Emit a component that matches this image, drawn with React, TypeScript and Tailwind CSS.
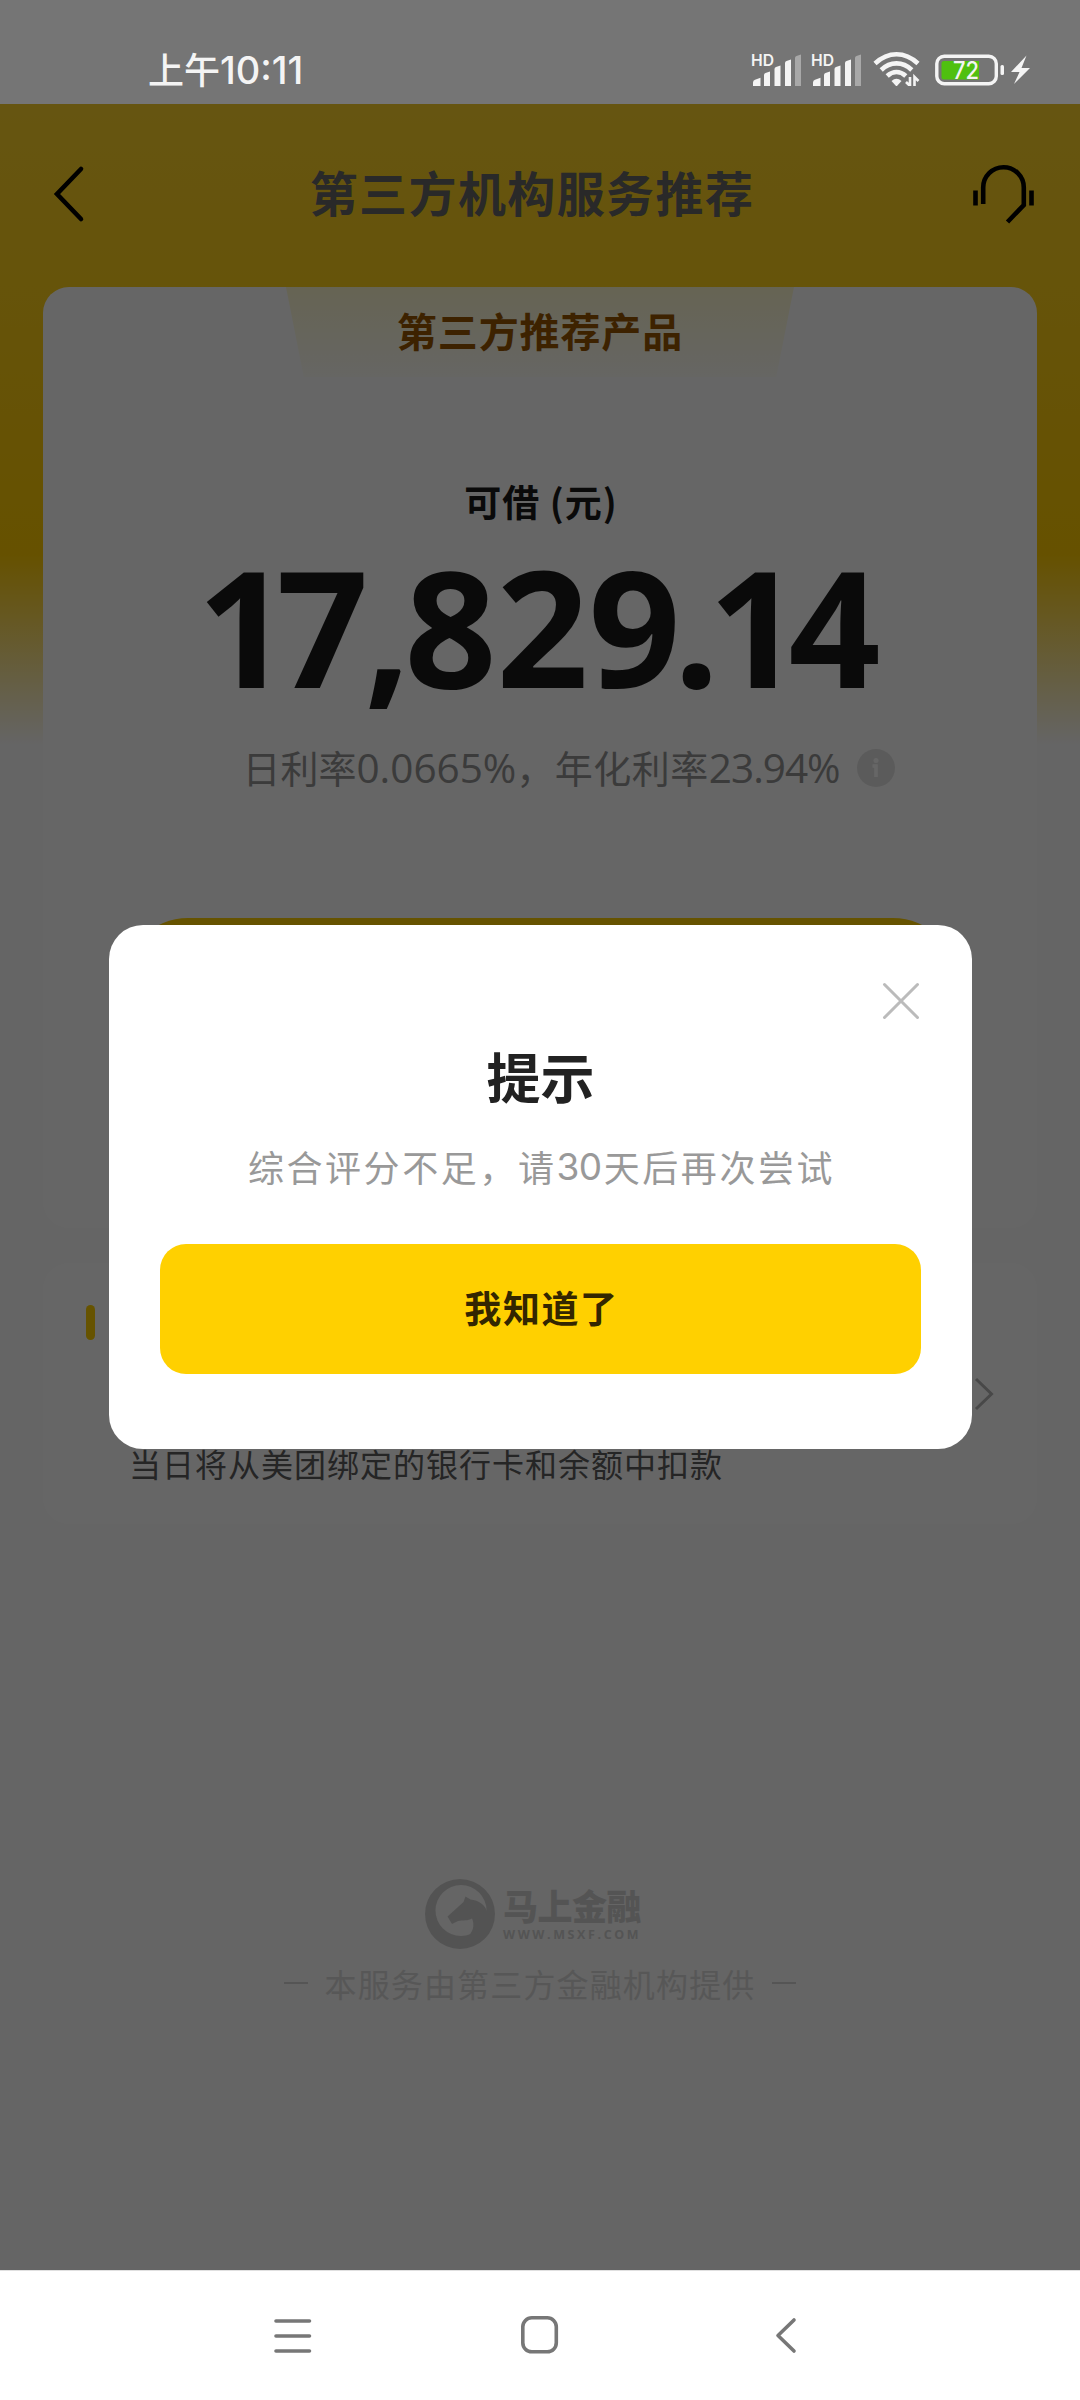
import { useState } from "react";

const CJK = "font-['Noto_Sans_CJK_SC',sans-serif]";
const NUM = "font-['Open_Sans','Noto_Sans_CJK_SC',sans-serif]";

function Signal() {
  return (
    <svg width="60" height="36" viewBox="0 0 60 36" className="shrink-0">
      <text
        x="0"
        y="15.500"
        fontFamily="Inter, sans-serif"
        fontSize="16"
        fontWeight="600"
        textLength="23"
        lengthAdjust="spacingAndGlyphs"
        fill="#f4f4f4"
      >
        HD
      </text>
      <g fill="#f4f4f4">
        <path d="M2 36v-3.500q0-2 2-2.700l5.500-2V36z" />
        <path d="M13 36V25q0-1.500 1.500-2l4.500-1.500V36z" />
        <path d="M23.500 36V19q0-1.500 1.500-2l4.500-1.500V36z" />
        <path d="M34 36V13q0-1.500 1.500-2l4.500-1.500V36z" />
      </g>
      <path d="M44 36V8q0-1.500 1.500-2L50 4.500V36z" fill="#a8a8a8" />
    </svg>
  );
}

function Wifi() {
  return (
    <svg width="48" height="36" viewBox="0 0 48 36" className="shrink-0" fill="none">
      <g stroke="#f4f4f4" strokeWidth="4.600">
        <path d="M2 13.500Q12 4.300 23.500 4.300T45 13.500" />
        <path d="M8.200 20Q15 13.400 23.500 13.400T38.800 20" />
        <path d="M14.200 26Q18.500 22 23.500 22T32.800 26" />
      </g>
      <path d="M18.500 31q5-4.500 10 0l-5 5.500z" fill="#f4f4f4" />
      <g stroke="#f4f4f4" strokeWidth="2.600">
        <path d="M37 27v9l-4-4" />
        <path d="M41.500 36v-9l4 4" />
      </g>
    </svg>
  );
}

function Battery() {
  return (
    <svg width="98" height="36" viewBox="0 0 98 36" className="shrink-0">
      <rect x="1.800" y="6.200" width="59.500" height="27.500" rx="7.500" fill="none" stroke="#f4f4f4" strokeWidth="3.400" />
      <path d="M9 10.900h35v18.500H9q-2.500 0-2.500-2.500V13.400q0-2.500 2.500-2.500z" fill="#4fc010" />
      <rect x="65.500" y="15" width="3.500" height="10" rx="1.500" fill="#f4f4f4" />
      <text x="18" y="28.800" fontFamily="Inter, sans-serif" fontSize="24" fontWeight="500" textLength="26" lengthAdjust="spacingAndGlyphs" fill="#f4f4f4">
        72
      </text>
      <path d="M91.500 5.500L76 22h8.500L79 34 95 18h-8.500z" fill="#f4f4f4" />
    </svg>
  );
}

function StatusBar() {
  return (
    <div className="flex h-[104px] items-start bg-[#757575] pl-[148px]">
      <div className="mt-[48px] flex h-10 w-[160px] items-center leading-10 whitespace-nowrap text-[#f4f4f4]">
        <span className={`${CJK} text-4xl leading-10 font-medium`}>上午</span>
        <span className="mt-[3px] font-['Inter',sans-serif] text-[38px] leading-10 font-medium">10:11</span>
      </div>
      <div className="mt-[50px] ml-[443px] flex">
        <Signal />
        <Signal />
        <div className="ml-[2px] flex">
          <Wifi />
        </div>
        <div className="ml-[14px] flex">
          <Battery />
        </div>
      </div>
    </div>
  );
}

function Header() {
  return (
    <div className="flex h-[183px] items-start justify-between pt-[58px] pr-[43px] pl-[52px]">
      <svg width="36" height="64" viewBox="0 0 36 64" fill="none" stroke="#000" strokeWidth="4.600">
        <path d="M29 7L5 32 29 57" strokeLinecap="round" />
      </svg>
      <h1 className={`${CJK} -mt-px ml-[3px] text-5xl leading-[60px] font-bold tracking-[1.400px] text-[#666]`}>
        第三方机构服务推荐
      </h1>
      <svg width="64" height="66" viewBox="0 0 64 66" fill="none" stroke="#000" strokeWidth="4.600">
        <path d="M10.200 42V25.500a20.300 20.300 0 0 1 40.600 0V43L34.500 60" />
        <path d="M2.500 28.500v15M58.500 28.500v15" strokeWidth="4.600" />
      </svg>
    </div>
  );
}

function QuotaCard() {
  return (
    <section className="mx-[43px] flex h-[941px] flex-col items-center overflow-hidden rounded-[26px] bg-white">
      <div className="flex h-[90px] w-[508px] justify-center bg-linear-to-b from-[#fffad0] to-[#fffef8] pt-[15px] [clip-path:polygon(0_0,100%_0,96.500%_100%,3.500%_100%)]">
        <span className={`${CJK} text-[40px] leading-[56px] font-bold tracking-[0.900px] text-[#985600]`}>第三方推荐产品</span>
      </div>
      <div className={`${CJK} mt-[96px] ml-[2px] text-[37px] leading-[56px] font-bold tracking-[1px] text-[#1a1a1a]`}>可借 (元)</div>
      <div className={`${NUM} mt-[2px] mr-[2px] flex h-[190px] items-center text-[161px] leading-[190px] font-[680] text-[#1a1a1a]`}>
        <span className="tracking-[-13px]">1</span>
        <span className="tracking-[-4px]">7</span>
        <span className="tracking-[-6px]">,</span>
        <span>82</span>
        <span className="tracking-[-7px]">9</span>
        <span className="tracking-[-11px]">.</span>
        <span className="tracking-[-12px]">1</span>
        <span>4</span>
      </div>
      <div className="mt-[23px] ml-[57px] flex h-[48px] items-center text-[38px] leading-[48px] text-[#949494]">
        <span className={`${CJK} -mt-[2px]`}>日利率</span>
        <span className={`${NUM} text-[40.500px]`}>0.0665%</span>
        <span className={`${CJK} -mt-[2px] tracking-[0.500px]`}>，年化利率</span>
        <span className={`${NUM} text-[40.500px] tracking-[-1px]`}>23.94%</span>
        <svg width="38" height="38" viewBox="0 0 38 38" className="ml-[17px]">
          <circle cx="19" cy="19" r="19" fill="#e4e4e4" />
          <circle cx="19" cy="11.500" r="2.500" fill="#fff" />
          <path d="M15.500 17H19v11" fill="none" stroke="#fff" strokeWidth="3.500" />
        </svg>
      </div>
      <div className="mt-[126px] h-[130px] w-[835px] shrink-0 rounded-full bg-[#ffd000]" />
    </section>
  );
}

function RepayCard() {
  return (
    <section className="mx-[43px] mt-[35px] h-[261px] rounded-[26px] bg-white pt-[42px] pr-[42px] pl-[43px]">
      <div className="h-[35px] w-[9px] rounded-full bg-[#ffd000]" />
      <div className="mt-[36px] flex justify-end">
        <svg width="22" height="36" viewBox="0 0 22 36" fill="none" stroke="#b4b4b4" strokeWidth="3">
          <path d="M3 3l15.500 15L3 33" />
        </svg>
      </div>
      <p className={`${CJK} mt-[28px] ml-[43px] text-[32px] leading-[46px] tracking-[1px] text-[#5c5c5c]`}>
        当日将从美团绑定的银行卡和余额中扣款
      </p>
    </section>
  );
}

function Provider() {
  return (
    <footer className="mt-[355px] flex flex-col items-center text-[#d2d2d2]">
      <div className="flex items-center gap-[8px] pr-[14px]">
        <svg width="70" height="70" viewBox="0 0 70 70" fill="#d0d0d0">
          <path
            fillRule="evenodd"
            d="M35 0a35 35 0 1 0 0 70a35 35 0 1 0 0-70zM36 6a25.500 25.500 0 1 0 0 51a25.500 25.500 0 1 0 0-51z"
          />
          <path d="M22.500 37.500L38.500 23l2-5.500 5 3C54 21 60 26 63 34l3 11-10 15-14-2c6-4 8-12 5-18.500-4 2.500-9 1.500-14 2.500l-6 3z" />
        </svg>
        <div className="flex w-[138px] flex-col">
          <span className={`${CJK} h-[36px] text-[35px] leading-[36px] font-black tracking-[-0.500px] whitespace-nowrap`}>马上金融</span>
          <span className="mt-[5px] font-['Open_Sans',sans-serif] text-[12.500px] leading-[14px] font-bold tracking-[2.600px]">
            WWW.MSXF.COM
          </span>
        </div>
      </div>
      <div className="mt-[11px] flex items-center gap-[17px] text-[#dadada]">
        <span className="h-[2px] w-[24px] bg-[#d4d4d4]" />
        <span className={`${CJK} text-[32px] leading-[46px] tracking-[1.150px]`}>本服务由第三方金融机构提供</span>
        <span className="h-[2px] w-[24px] bg-[#d4d4d4]" />
      </div>
    </footer>
  );
}

function TipModal({ onClose }: { onClose: () => void }) {
  return (
    <div className="absolute inset-0 flex items-start justify-center bg-black/60 pt-[821px]">
      <div className="ml-px flex h-[524px] w-[863px] flex-col items-center rounded-[34px] bg-white px-[51px]">
        <button onClick={onClose} className="mt-[57px] mr-px self-end">
          <svg width="38" height="38" viewBox="0 0 38 38" fill="none" stroke="#bbb" strokeWidth="3" strokeLinecap="round">
            <path d="M2.500 2.500l33 33M35.500 2.500l-33 33" />
          </svg>
        </button>
        <h2 className={`${CJK} mt-[24px] text-[54px] leading-[64px] font-bold text-[#222]`}>提示</h2>
        <p className={`${CJK} mt-[30px] ml-[2px] flex items-center text-[36px] leading-[52px] text-[#999]`}>
          <span className="tracking-[2.570px]">综合评分不足，请</span>
          <span className="mt-[3px] mr-[2px] font-['Inter',sans-serif] text-[37px] tracking-[-0.500px]">30</span>
          <span className="tracking-[2.570px]">天后再次尝试</span>
        </p>
        <button
          onClick={onClose}
          className={`${CJK} mt-[51px] h-[130px] w-[761px] shrink-0 rounded-[26px] bg-[#ffd000] pb-[2px] pl-[2px] text-[37px] font-bold tracking-[1.600px] text-[#332600]`}
        >
          我知道了
        </button>
      </div>
    </div>
  );
}

function NavBar() {
  return (
    <nav className="flex h-[130px] border-t border-[#e0e0e0] bg-white pt-[44px] pl-[272px]">
      <svg width="42" height="42" viewBox="0 0 42 42" fill="none" stroke="#777" strokeWidth="3.600" strokeLinecap="round">
        <path d="M4 6h33.500M4 21h33.500M4 36h33.500" />
      </svg>
      <svg width="42" height="42" viewBox="0 0 42 42" className="ml-[205px]" fill="none" stroke="#777" strokeWidth="3.600">
        <rect x="3.800" y="2.800" width="33.500" height="34" rx="9" />
      </svg>
      <svg width="42" height="42" viewBox="0 0 42 42" className="ml-[203px]" fill="none" stroke="#777" strokeWidth="3.600" strokeLinecap="round">
        <path d="M30 5L14 20.500 30 36" strokeLinejoin="round" />
      </svg>
    </nav>
  );
}

export default function App() {
  const [open, setOpen] = useState(true);

  return (
    <div className="flex h-[2400px] w-[1080px] flex-col overflow-hidden bg-white">
      <StatusBar />
      <main className="relative h-[2166px] bg-[#fcfcfc] bg-[linear-gradient(to_bottom,#ffd52c_0,#ffcb00_450px,#fcfcfc_640px)]">
        <Header />
        <QuotaCard />
        <RepayCard />
        <Provider />
        {open && <TipModal onClose={() => setOpen(false)} />}
      </main>
      <NavBar />
    </div>
  );
}
